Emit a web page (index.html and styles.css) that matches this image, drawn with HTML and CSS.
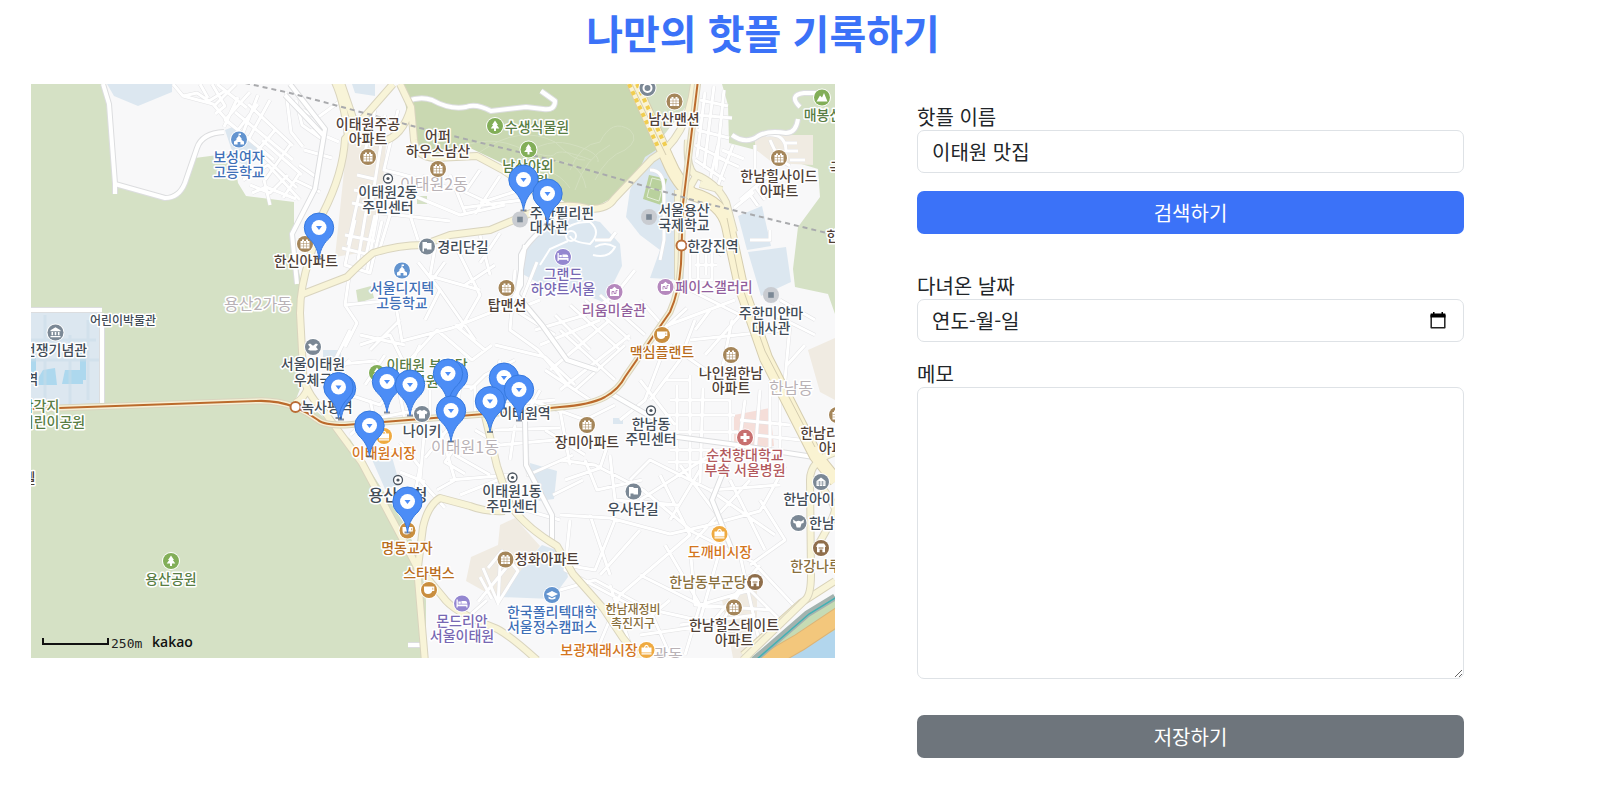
FILE: index.html
```html
<!DOCTYPE html>
<html lang="ko">
<head>
<meta charset="utf-8">
<title>나만의 핫플 기록하기</title>
<meta name="viewport" content="width=device-width, initial-scale=1">
<link rel="stylesheet" href="styles.css">
</head>
<body>
<main class="page">
<h1 class="title">나만의 핫플 기록하기</h1>
<div class="content">
<section class="map-panel" aria-label="지도">
<svg class="map" viewBox="31 84 804 574" role="img" aria-label="이태원 지도">
<defs>
<symbol id="pin" viewBox="0 0 32 48" overflow="visible"><path d="M13 46.500h6" stroke="#3d4656" stroke-width="2" opacity=".6"/><path d="M16 46.500C14.500 36 10.500 30.500 5.500 26A14.700 14.700 0 1 1 26.500 26C21.500 30.500 17.500 36 16 46.500Z" fill="#4c8df6" stroke="#3679df"/><circle cx="16" cy="15.500" r="7.500" fill="#fff"/><path d="M13 14h6l-3 4z" fill="#4c8df6"/></symbol>
<g id="apt"><path d="M-4.500-3h1.500v-1.500h2v1.500h2v-1.500h2v1.500h1.500v7.500h-9z" fill="#fff"/><path d="M-4.500-.5h9M-4.500 2h9M-1.500-3v7.500M1.500-3v7.500" stroke="#a5865a" stroke-width=".5"/></g>
<path id="school" d="M-.4-6h2.400v1.600H.4V-3.500L2.600-1V.6L5 2V5H1.400V2.600h-2.800V5H-5V2l2.400-1.400V-1L-.4-3.500z" fill="#fff"/>
<path id="tree" d="M0-5.500 3-1H1.800L4.300 2.500H1V5H-1V2.500H-4.300L-1.800-1H-3z" fill="#fff"/>
<path id="hill" d="M-5.500 4 -2-2 0 0 2-4.500 5.500 4z" fill="#fff"/>
<g id="dot"><circle r="4.500" fill="#fff" stroke="#4c555f" stroke-width="1.300"/><circle r="1.600" fill="#4c555f"/></g>
<g id="embassy"><circle r="8" fill="#c9ccd1"/><path d="M-2.800-2.800h5.600v5.600h-5.600z" fill="#7b8895"/></g>
<path id="flag" d="M-4.500-4.500H0v1H4.500V3H0V2H-3V5H-4.500z" fill="#fff"/>
<path id="bed" d="M-5.500-4h1.300V1H5.500v3H4.300V2.800H-4.300V4H-5.500zM-3.600-2h2.400v2.300h-2.400zM-.6-2.600H3.500Q5.300-2.600 5.300 0V.3H-.6z" fill="#fff"/>
<g id="art"><path d="M-4.500-3h2L0-5.200 2.500-3h2v7h-9z" fill="#fff"/><path d="M-2.500 2.500v-3h2v2h2v-3h1.500" fill="none" stroke="#b588bd"/></g>
<path id="cup" d="M-5-3.500H5.300V1H3.300Q2.500 4-1 4-5 4-5 0zM3.500-2.200V-.2H4.200V-2.200z" fill="#fff" fill-rule="evenodd"/>
<path id="bag" d="M-5 4.500v-1.200H5v1.200zM-5 2.500v-5h2.500Q-2-5.200 0-5.200T2.500-2.500H5v5zM-1.400-2.500h2.800Q1-4 0-4T-1.400-2.500z" fill="#fff" fill-rule="evenodd"/>
<path id="shirt" d="M-2-4.200Q0-2.500 2-4.200L5.500-2 4.300.5 3-.2V4.500H-3V-.2L-4.300.5-5.500-2z" fill="#fff"/>
<path id="museum" d="M0-5.300 5-2.300v1H-5v-1zM-4-.5h1.600V2.800H-4zM-.8-.5H.8V2.800H-.8zM2.400-.5H4V2.800H2.400zM-5 3.500H5V4.700H-5z" fill="#fff"/>
<path id="mail" d="M-5-2.500-3-3.500 0-1.200 3-3.500 5-2.500 3 0 5 2.500 3 3.500H-3L-5 2.500-3 0z" fill="#fff"/>
<path id="cross" d="M-1.500-4.500h3v3h3v3h-3v3h-3v-3h-3v-3h3z" fill="#fff"/>
<path id="cap" d="M0-4 6-1 0 2-6-1zM-3.500 1.500 0 3.200 3.500 1.500V3.500Q0 5.500-3.500 3.500z" fill="#fff"/>
<path id="shrine" d="M-3-4.500H3L5.200-1.200H4V4.300H1.400V1.500H-1.400V4.300H-4V-1.200H-5.200zM-2.400-.5v1h4.800v-1z" fill="#fff" fill-rule="evenodd"/>
<g id="house"><path d="M0-4.500 4.500-1V4h-9v-5z" fill="#fff"/><path d="M-3.500 0h7M-3.500 2h7M-1.500-1v5M1.500-1v5" stroke="#7b8895" stroke-width=".6"/></g>
<path id="bull" d="M-5.500-3.500-2.500-1.500Q0-3 2.500-1.500L5.500-3.500 5 0 3 .5 1.800 4.500H-1.800L-3 .5-5 0z" fill="#fff"/>
<g id="net">
<path d="M173 84l10 12 14-3 12 8 16-10M183 96l30 8 17 20M200 84l8 14M212 84l13 22-10 8M217 84l30 24M236 84l-22 22M238 97l-14 30M250 92l-25 28 13 10 20-26M226 120l48 40M235 112l58 48M248 104l45 42M258 95l-15 38M270 100l-22 40M275 130l-20 24M290 145l-25 35M257 150l40 38M262 140l40 35M243 180l25-15 32 35M250 185l20 8 18-18M252 193l14-6 30 12M270 205l-6-25M283 198l16-24M286 92l5 40 12 15M296 100l6 25 20 14M303 110l14 8 22-16M311 130l28 12M304 150l28 8M299 165l20 14M295 180l25 12"/>
<path d="M375 110l-12 50M385 115l-5 35-8 50M398 110l-14 60 20 5 42 12M425 175l-20 30-25 8 70 8M400 190l60 25 45-10M450 175l16 40M480 170l-15 22 30 14M500 176l-25 38M520 190l-40 13M462 208l60-8M375 215l-10 45M390 215l-10 33M410 215l8 25M350 270l-5 35 12 18-12 24M345 305l50-5 7 41 50-13 70-28 15-38M400 320l-30 30M418 262l22 28-15 30M435 248l-5 28 50 14M445 262l-20 28M455 245l25 50-20 35M480 235l10 40M500 233l-20 30M495 265l-30 20M440 290l35 50M455 325l30 25M350 330l-20 40M360 345l30-10 15 30 32-35 35 30 20-15M385 355l-20 30M405 345l-45-10M420 345l-20 42"/>
<path d="M515 270l-5 60 28 20 30 35M515 310l40 25M540 300l-25 10M535 330l50-15 30-20 20-25M555 315l35 35M570 305l50 45M585 300l45 40M600 295l45 40M540 345l60-25M550 370l60-50M560 390l70-55M575 390l50-45M590 400l-45-30M615 380l-55-50M495 345l50 12 30 28M500 360l-10 40M470 390l15-15 30-15M640 300l25 28 22-20M655 330l80-30M670 345l50 35 12-60M690 290l50 25-35 40M695 320l-15 40-30 40M700 240l22 15M690 250v30h22v-30zM698 250v30M706 250v25M695 265h22"/>
<path d="M705 92l-8 65M714 86l-10 82M724 90l-8 80M700 100l28 6M698 115l34 3M697 130l32 8M695 145l30 15M718 145l-8 35M733 145l-15 40M695 160l30 20M722 150l22 9M719 158l20 9M740 200l35-30M734 208l20-16M748 192l10 14M755 186l10 14M690 340l95-10M710 310l-15 20M735 290l25 30M780 300l35 20M775 315l40 20M790 325l-5 55M805 345l-18 20"/>
<path d="M640 380l35 45M660 360l-15 40-25 20M665 380h25v70M670 400h60M677 385v85M690 375v105M703 388l-3 95M665 415h70M660 432h78M670 450h78M668 462h60M730 400v50M745 400l-8 60M760 390l-5 65M770 380v75M780 395v65M740 420l50 5M755 435l45 5"/>
<path d="M560 460l35 5 48 25 50 42 60 30 45 48M560 515l50 3 60 16 35-8 55-15 25-45M565 480l35-12 10-30M585 460l12 30 45-10M610 455l5 45 65 5M630 480l20-20 60 30 70-5M640 500l70-45M660 475l30 60-70 60-25 60M680 465l45 60M700 470l-30 50M710 490l65 45M730 480l35 70M750 480l-55 60M760 500l25 40-35 25M570 520l-5 50 65 35 90 20 30-50M590 515l20 60M615 520l-20 50-30-5M640 530l-40 45M560 590l35-10 55 30 20 45M610 585l20 60M640 575l60 30 50-15 35 35M665 545l35 60-15 50M690 545l5 60 75 5M720 550l-20 70M740 555l20 90M760 565l-50 60-70 10M670 600l-30 25M680 625l75-10"/>
<path d="M425 425l-5 55 25 28M440 430l15 50-18 10M455 420l-30 38M455 455l35 20M450 480l60-5M460 495l50-20M400 442l20 25-8 42M385 450l30 5M400 472l25 10M475 430l25 15 55-5M460 440l-15 22 20 12M525 415l3 60 45-20M495 430l65-2M530 400l55 20 30-15M515 425l-5 35M560 410l10 55M545 430l40 25M553 495l30-15M560 520l-35-10M350 435l18-15 50-10M350 395l30 10 15-20M370 400l5 22M400 395l5 25M430 390v28M440 385l35 2v25M460 385l-3 30M500 405l55-5M540 390l-10 18"/>
<path d="M355 220l-10 45 25 8 12-52M345 235l30 6M342 248l32 8M354 190l20 4M352 203l22 5M357 175l17 4M360 190l-12 55M370 188l-12 72M382 188l-15 83M488 568l14-17 16 20-20 32-15-35M500 565l-2 40M480 577l12 22M487 600l-17 15M350 360l-25 22M330 365l45-4 10 12M478 602l28-34M766 135q20-2 20 16h12M755 145v24M770 140q8 20 20 26M790 160h15M785 143h12M650 170q14 0 14 20v50l-4 20M595 240h15l6-8M750 240h20v-10"/>
</g>
<path id="mid-lines" d="M103 84l6 20 6 80v10M115 184l50 14q14 0 20-15l12-35q5-15 27-16M290 84l35 45-10 60-23 45 5 50M285 95l38 40M608 392l45 26M670 436l60 8 90 14M525 420l1 45 26 50v30M102 310H31M102 313v90M408 645h14M407 101q14-5 25-1 18 10 34 7 10-4 25 4l35-4 17 2q12 2 12-8l-14-10M732 135q14 10 26 1 10-6 28-3 10 0 12-14M800 107q-12-12 4-14h12M525 245l-8 50 25 30 25 35 30 10M560 215q-32 24-39 40v30l-14 25M730 455l-18 45 20 50"/>
<path id="arterial-lines" d="M334 80q10 20 14 57M340 80l13 38M393 84l-48 55q-2 35-22 74l-13 44q-10 30-10 56l3 57q0 20 20 40l39 53 41 77 14 27 8 95M295 403q8-3 13-15M303 294l44-17q15-15 26-24 25-8 50-8l27-10 40-5 48-20q30-8 52-1 18 0 24-10l38-40q35-20 42-75M400 84l11 23 3 33q2 17 21 18l42-2 26 14 22 15 35 22M411 107q-8 30-30 35M485 416l12 50 13 39q15 22 47 41l16 28 30 34 20 30 18 22M418 567l5-40q5-22 17-29l30 8q15 6 35 5M418 567l25 30q10 15 52 31 12 5 42 32M743 660l62-60q6-5 6-25l-1-95q0-20 26-28M816 480q18 22 19 30-2 10-20 40"/>
<path id="express-lines" d="M632 80l36 80q10 24 24 34 30 8 36 32l13 60 25 72 50 98 20 25"/>
<path id="ramp-lines" d="M688 140q-2 26 6 34 22 8 32 28l8 30M678 190v90M696 176l-10 18M700 184l22 6"/>
</defs>
<path class="land" d="M31 84h804v574H31z"/>
<g class="park">
<path d="M31 84h70l7 24 7 76 50 14 14-8 16-32 38-5 5 30 8 13 48 6-2 35 11 55-3 60 6 22-10 25 20 12 34 28 55 86 16 36 5 40v58H31z"/>
<path d="M722 84h113v230l-7-20-33-7-2-18 5-42 22-30-2-28-66-20-23-6-1-38z"/><path d="M630 84h66l-8 20-31 40-20-25z"/>
<path d="M290 203h4v44h-4zM417 196h10v8h-10zM356 290l15-4 3 12-16 5z"/>
</g>
<path class="forest" d="M402 84h230l23 52 2 16-47 47-18 10-20-1-36-28-30-15-38-18-32 7-24-12z"/>
<g class="campus">
<path d="M107 84h65v8l-34 14-24-10zM225 130l10-4 26 22-12 20-14-8zM31 312l69-1 3 92-72 3zM352 84h23v12l-20-3zM630 190l15-33 11-7 14 24 14 22v84l-34-2 10-28-20-15-14-18z"/>
<path d="M521 255l18-22 35-17 26 6 20 22 2 22-10 20-4 18-30-12-34-6-25-14zM748 252l38-5 5 35-30 14zM738 216l24-10 9 40-24 4zM370 455l22 2 8 28-15 4zM530 463l27 8-3 28-15 2-8-20zM542 545l20 7 6 25-16 22-52-2 20-30zM323 350h18v12h-18zM613 418h10v6h-10z"/>
</g>
<path d="M31 350h5v28h-5zM80 350h6v30h-6zM43 370l12-2 2 17H34zM65 370h18v14H62z" fill="#add8ee"/>
<path d="M31 340h65M31 360h68M45 315v90M70 335v70M88 320v80" stroke="#cadde9" stroke-width="3" opacity=".5"/>
<g class="estate"><path d="M347 143l39 1-5 65-16 43-30 5zM755 135h58v30l-40-2-18-14zM500 525l15-7 25 28-42 53-32-18 5-24 27-12zM808 350l27-12v62l-15-8zM722 600l35-10v30l-16 38h-8z"/><path d="M734 415l36-7 4 38-40 5z" fill="#f5ded9"/></g>
<path d="M649 175l18 4-6 26-18-6z" fill="#b9d19d"/><path d="M652 178l12 3-5 20-12-4zM649 188l13 3" fill="none" stroke="#e4eed8"/>
<path class="trail" d="M440 158q40-26 75-12t40 8 36 6M480 152q40-28 75-10 20 20 30 18M510 168q30-32 60-24t28 18M570 170q10-26 30-28 12-24 30-12 10 10-5 20M575 190q10-32 35-45M595 180q12-24 30-30M520 178q30-18 50 10M550 162q30-4 36 26"/>
<use href="#net" class="lane-edge"/><use href="#net" class="lane"/>
<use href="#mid-lines" class="mid-edge"/><use href="#mid-lines" class="mid"/>
<g fill="none" stroke="#fff" stroke-width="2"><path d="M560 235q10-14 30-13 12 10 0 22-18-2-20-8M540 265l10-16 18-8M595 247q10-6 20 0-6 12-22 8"/><circle cx="571" cy="236" r="5"/></g>
<path d="M745 662l90-66v66z" fill="#c6dbb4"/><path d="M780 662l55-32v32z" fill="#b2d6ed"/><path d="M762 664l38-22 42-28" stroke="#dcb477" stroke-width="18" fill="none"/><path d="M762 664l38-22 42-28" stroke="#f3c77c" stroke-width="16" fill="none"/>
<path d="M754 660l53-46 28-17" stroke="#a3b3af" stroke-width="7" fill="none"/><path d="M756 660l53-46 28-17" stroke="#41b1b4" stroke-width="1.500" fill="none"/>
<path d="M743 655l58-52 34-22" stroke="#d8d1b6" stroke-width="8" fill="none"/><path d="M743 655l58-52 34-22" stroke="#f8f4d8" stroke-width="6" fill="none"/>
<use href="#arterial-lines" class="arterial-edge"/><use href="#ramp-lines" class="arterial-edge"/><use href="#express-lines" class="express-edge"/>
<use href="#arterial-lines" class="arterial"/><use href="#ramp-lines" class="arterial"/><use href="#express-lines" class="express"/>
<path d="M632 84l34 71M727 218l12 60 26 73 50 96" fill="none" stroke="#d5cdb0"/><path d="M629 84l29 63M637 84l29 63" stroke="#f0cd50" stroke-width="4" stroke-dasharray="4 4"/>
<path id="metro-line" class="metro-road-edge" d="M31 409l225-8q20-1 39 6 12 5 23 13 5 5 27 5l165-13 50-5q30-2 45-10 14-8 20-20l45-65q9-20 11-48l2-60 15-124"/>
<path class="metro-road" d="M31 409l225-8q20-1 39 6 12 5 23 13 5 5 27 5l165-13 50-5q30-2 45-10 14-8 20-20l45-65q9-20 11-48l2-60 15-124"/>
<path class="metro" d="M31 409l225-8q20-1 39 6 12 5 23 13 5 5 27 5l165-13 50-5q30-2 45-10 14-8 20-20l45-65q9-20 11-48l2-60 15-124"/>
<path class="boundary" d="M245 83l45 10 130 35 140 34 140 40 135 33"/>
<g class="station"><circle cx="295.500" cy="407" r="5"/><circle cx="681.500" cy="245.500" r="5"/></g>

<g class="district"><text x="258" y="310">용산2가동</text><text x="434" y="190">이태원2동</text><text x="791" y="394">한남동</text><text x="465" y="453">이태원1동</text><text x="668" y="661">광동</text></g>

<g class="badges">
<g fill="#6394cf"><circle cx="239" cy="139.500" r="8"/><circle cx="402" cy="270.500" r="8"/><circle cx="552" cy="595" r="8"/></g>
<g fill="#82ae58"><circle cx="495" cy="126" r="8"/><circle cx="528.500" cy="149.500" r="8"/><circle cx="171" cy="561" r="8"/><circle cx="822" cy="97.500" r="8"/><circle cx="377" cy="373" r="8"/></g>
<g fill="#a5865a"><circle cx="368" cy="157" r="8"/><circle cx="438" cy="169" r="8"/><circle cx="305" cy="244" r="8"/><circle cx="506.500" cy="288" r="8"/><circle cx="674.500" cy="101.500" r="8"/><circle cx="779" cy="158" r="8"/><circle cx="731" cy="355" r="8"/><circle cx="587" cy="425" r="8"/><circle cx="837" cy="415" r="8"/><circle cx="505.500" cy="559.500" r="8"/><circle cx="734" cy="607.500" r="8"/></g>
<g fill="#7b8895"><circle cx="55.500" cy="332.500" r="8"/><circle cx="427" cy="246.500" r="8"/><circle cx="313" cy="347" r="8"/><circle cx="422" cy="414" r="8"/><circle cx="633.500" cy="491.500" r="8"/><circle cx="821" cy="482" r="8"/><circle cx="798.500" cy="523" r="8"/><circle cx="647.500" cy="88" r="8"/></g>
<g fill="#9487d0"><circle cx="563" cy="257" r="8"/><circle cx="462" cy="603.500" r="8"/></g>
<g fill="#b588bd"><circle cx="665.500" cy="287" r="8"/><circle cx="614.500" cy="292" r="8"/></g>
<g fill="#c98e3f"><circle cx="662" cy="335" r="8"/><circle cx="407.500" cy="530.500" r="8"/><circle cx="429" cy="590" r="8"/></g>
<g fill="#efaa41"><circle cx="384" cy="436" r="8"/><circle cx="719.500" cy="534" r="8"/><circle cx="646.500" cy="650" r="8"/></g>
<circle cx="745" cy="437.500" r="8" fill="#c87070"/>
<g fill="#8f6e4b"><circle cx="755" cy="582" r="8"/><circle cx="821" cy="548" r="8"/></g>
</g>
<use href="#school" x="239" y="139.500"/><use href="#school" x="402" y="270.500"/><use href="#cap" x="552" y="595"/>
<use href="#tree" x="495" y="126"/><use href="#tree" x="528.500" y="149.500"/><use href="#tree" x="171" y="561"/><use href="#hill" x="822" y="97.500"/><use href="#tree" x="377" y="373"/>
<use href="#apt" x="368" y="157"/><use href="#apt" x="438" y="169"/><use href="#apt" x="305" y="244"/><use href="#apt" x="506.500" y="288"/><use href="#apt" x="674.500" y="101.500"/><use href="#apt" x="779" y="158"/><use href="#apt" x="731" y="355"/><use href="#apt" x="587" y="425"/><use href="#apt" x="837" y="415"/><use href="#apt" x="505.500" y="559.500"/><use href="#apt" x="734" y="607.500"/>
<use href="#museum" x="55.500" y="332.500"/><use href="#flag" x="427" y="246.500"/><use href="#mail" x="313" y="347"/><use href="#shirt" x="422" y="414"/><use href="#flag" x="633.500" y="491.500"/><use href="#house" x="821" y="482"/><use href="#bull" x="798.500" y="523"/><circle cx="647.500" cy="88" r="4" fill="none" stroke="#fff" stroke-width="2"/>
<use href="#bed" x="563" y="257"/><use href="#bed" x="462" y="603.500"/><use href="#art" x="665.500" y="287"/><use href="#art" x="614.500" y="292"/>
<use href="#cup" x="662" y="335"/><use href="#cup" x="407.500" y="530.500"/><use href="#cup" x="429" y="590"/><use href="#bag" x="384" y="436"/><use href="#bag" x="719.500" y="534"/><use href="#bag" x="646.500" y="650"/><use href="#cross" x="745" y="437.500"/><use href="#shrine" x="755" y="582"/><use href="#shrine" x="821" y="548"/>
<use href="#embassy" x="520" y="219.500"/><use href="#embassy" x="649" y="217"/><use href="#embassy" x="771" y="295"/>
<use href="#dot" x="388" y="178.500"/><use href="#dot" x="651" y="410.500"/><use href="#dot" x="398" y="480"/><use href="#dot" x="512.500" y="477.500"/>

<g class="label blue"><text x="239" y="162">보성여자</text><text x="239" y="177">고등학교</text><text x="402" y="293">서울디지텍</text><text x="402" y="308">고등학교</text><text x="552" y="617">한국폴리텍대학</text><text x="552" y="632">서울정수캠퍼스</text></g>
<g class="label green"><text x="537" y="132">수생식물원</text><text x="528" y="171">남산야외</text><text x="529" y="186">식물원</text><text x="171" y="584">용산공원</text><text x="823" y="120">매봉산</text><text x="427" y="370">이태원 부군당</text><text x="413" y="386">역사공원</text><text x="40" y="411">삼각지</text><text x="53" y="427">어린이공원</text></g>
<g class="label brown"><text x="368" y="129">이태원주공</text><text x="368" y="144">아파트</text><text x="438" y="141">어퍼</text><text x="438" y="156">하우스남산</text><text x="306" y="266">한신아파트</text><text x="507" y="310">탑맨션</text><text x="674" y="124">남산맨션</text><text x="779" y="181">한남힐사이드</text><text x="779" y="196">아파트</text><text x="731" y="378">나인원한남</text><text x="731" y="393">아파트</text><text x="587" y="447">장미아파트</text><text x="826" y="438">한남리버</text><text x="838" y="453">아파트</text><text x="547" y="564">청화아파트</text><text x="734" y="630">한남힐스테이트</text><text x="734" y="645">아파트</text><text x="29" y="483">텔</text><text x="836" y="173">극</text><text x="833" y="241">한</text></g>
<g class="label slate"><text x="388" y="197">이태원2동</text><text x="388" y="212">주민센터</text><text x="562" y="218">주한필리핀</text><text x="549" y="232">대사관</text><text x="463" y="252">경리단길</text><text x="684" y="215">서울용산</text><text x="684" y="230">국제학교</text><text x="713" y="251">한강진역</text><text x="771" y="318">주한미얀마</text><text x="771" y="333">대사관</text><text x="313" y="369">서울이태원</text><text x="313" y="385">우체국</text><text x="327" y="412">녹사평역</text><text x="525" y="418">이태원역</text><text x="422" y="436">나이키</text><text x="512" y="496">이태원1동</text><text x="512" y="511">주민센터</text><text x="651" y="429">한남동</text><text x="651" y="444">주민센터</text><text x="633" y="514">우사단길</text><text x="809" y="504">한남아이</text><text x="822" y="528">한남</text><text x="55" y="355">전쟁기념관</text><text x="32" y="384">역</text><text x="123" y="325" class="small">어린이박물관</text><text x="398" y="501" class="large">용산구청</text></g>
<g class="label violet"><text x="563" y="279">그랜드</text><text x="563" y="294">하얏트서울</text><text x="462" y="626">몬드리안</text><text x="462" y="641">서울이태원</text></g>
<g class="label plum"><text x="714" y="292">페이스갤러리</text><text x="614" y="315">리움미술관</text></g>
<g class="label copper"><text x="662" y="357">맥심플랜트</text><text x="407" y="553">명동교자</text><text x="429" y="578">스타벅스</text></g>
<g class="label orange"><text x="384" y="458">이태원시장</text><text x="720" y="557">도깨비시장</text><text x="599" y="655">보광재래시장</text></g>
<g class="label red"><text x="745" y="460">순천향대학교</text><text x="745" y="475">부속 서울병원</text></g>
<g class="label olive"><text x="708" y="587">한남동부군당</text><text x="816" y="571">한강나루</text><text x="633" y="614" class="small">한남재정비</text><text x="633" y="628" class="small">촉진지구</text></g>

<g class="pins">
<use href="#pin" x="507.500" y="164" width="32" height="48"/><use href="#pin" x="531.500" y="178" width="32" height="48"/><use href="#pin" x="303" y="212" width="32" height="48"/>
<use href="#pin" x="325" y="373" width="32" height="48"/><use href="#pin" x="322.500" y="371.500" width="32" height="48"/>
<use href="#pin" x="371" y="366" width="32" height="48"/><use href="#pin" x="394" y="369" width="32" height="48"/>
<use href="#pin" x="437" y="360" width="32" height="48"/><use href="#pin" x="432" y="358" width="32" height="48"/>
<use href="#pin" x="488" y="362" width="32" height="48"/><use href="#pin" x="503" y="374" width="32" height="48"/><use href="#pin" x="474" y="385.500" width="32" height="48"/>
<use href="#pin" x="435" y="395" width="32" height="48"/><use href="#pin" x="353.500" y="410" width="32" height="48"/><use href="#pin" x="391.500" y="486" width="32" height="48"/>
</g>
<path d="M43 638v6h65v-6" fill="none" stroke="#111" stroke-width="2"/>
<text x="111" y="648" class="scale">250m</text><text x="152" y="647" class="brand">kakao</text>
</svg>
</section>
<form class="form">
<div class="field"><label for="place">핫플 이름</label><input id="place" type="text" class="control" value="이태원 맛집"></div>
<button type="button" class="button button-search">검색하기</button>
<div class="field"><label for="visited">다녀온 날짜</label>
<div class="control date"><input id="visited" type="text" class="date-text" value="연도-월-일"><button type="button" class="date-button" aria-label="날짜 선택"><svg viewBox="0 0 16 18" aria-hidden="true"><path d="M1.200 3v12.800h13.600V3" fill="none" stroke="#222" stroke-width="1.500" stroke-linejoin="round"/><path d="M.500 2Q.500 1.500 1 1.500h2V0h1.500v1.500h7V0H13v1.500h2q.500 0 .500.500v3.500H.500z" fill="#000"/></svg></button></div></div>
<div class="field field-memo"><label for="memo">메모</label><textarea id="memo" class="control memo"></textarea></div>
<button type="submit" class="button button-save">저장하기</button>
</form>
</div>
</main>
</body>
</html>
```
FILE: styles.css
```css
* { box-sizing: border-box; }

body {
  margin: 0;
  background: #fff;
  color: #212529;
  font: 20px/30px "Noto Sans CJK KR", sans-serif;
}

.page { padding: 8px 74px 30px 0; }

.title {
  margin: 0 0 28px;
  color: #3b72f8;
  font-size: 40px;
  line-height: 48px;
  font-weight: 700;
  text-align: center;
}

.content {
  display: grid;
  grid-template-columns: minmax(0, 804fr) minmax(0, 547fr);
  gap: 82px;
  align-items: start;
  padding: 0 62px 0 31px;
}

.map { display: block; width: 100%; overflow: hidden; }

.land { fill: #f8f8f9; }
.park { fill: #d5e1c5; }
.forest { fill: #c9d8b1; }
.campus { fill: #dce7f0; }
.estate { fill: #f0ebe2; }
.trail { fill: none; stroke: #d3dfbf; stroke-width: 1; }
.lane-edge { fill: none; stroke: #e2e2e4; stroke-width: 4; stroke-linejoin: round; }
.lane { fill: none; stroke: #fff; stroke-width: 3; stroke-linejoin: round; }
.mid-edge { fill: none; stroke: #dcdddf; stroke-width: 6; stroke-linejoin: round; }
.mid { fill: none; stroke: #fff; stroke-width: 4; stroke-linejoin: round; }
.arterial-edge { fill: none; stroke: #d9d4be; stroke-width: 8; stroke-linejoin: round; }
.arterial { fill: none; stroke: #f8f4d8; stroke-width: 6; stroke-linejoin: round; }
.express-edge { fill: none; stroke: #d5cdb0; stroke-width: 14; stroke-linejoin: round; }
.express { fill: none; stroke: #faf3d2; stroke-width: 12; stroke-linejoin: round; }
.metro-road-edge { fill: none; stroke: #d9d4be; stroke-width: 7; }
.metro-road { fill: none; stroke: #f6f0d6; stroke-width: 5; }
.metro { fill: none; stroke: #bb6a2c; stroke-width: 2; }
.boundary { fill: none; stroke: #a9aaad; stroke-width: 2; stroke-dasharray: 5 4; }
.station { fill: #fff; stroke: #ba6d36; stroke-width: 2; }
.badges { stroke: #fff; stroke-width: 2; paint-order: stroke; }

.label, .district {
  font-family: "Noto Sans CJK KR", sans-serif;
  font-size: 14px;
  font-weight: 500;
  text-anchor: middle;
  paint-order: stroke;
  stroke: #fff;
  stroke-width: 3px;
  stroke-linejoin: round;
}
.district { fill: #b9b2b6; font-size: 16px; font-weight: 400; }
.small { font-size: 12px; }
.large { font-size: 16px; }
.blue { fill: #3f70b7; }
.green { fill: #587d43; }
.brown { fill: #4f4037; }
.slate { fill: #424c57; }
.violet { fill: #7768b3; }
.plum { fill: #925f9d; }
.copper { fill: #b96d20; }
.orange { fill: #d3761e; }
.red { fill: #b2595d; }
.olive { fill: #89703e; }
.scale { font: 13px "DejaVu Sans Mono", monospace; fill: #222; }
.brand { font: 600 14px "Open Sans", sans-serif; fill: #111; }

.form { display: flex; flex-direction: column; padding-top: 17px; }

.field { display: flex; flex-direction: column; }

.control {
  display: block;
  width: 100%;
  height: 43px;
  padding: 0 14px;
  border: 1px solid #dee2e6;
  border-radius: 7px;
  background: #fff;
  color: #212529;
  font: inherit;
}
.field label { line-height: 29px; padding-top: 1px; }
.field label + .control { margin-top: -1px; }

.button {
  height: 43px;
  padding: 0;
  border: 0;
  border-radius: 7px;
  color: #fff;
  font: inherit;
}
.button-search { margin: 18px 0 36px; background: #3b72f8; }
.button-save { margin-top: 36px; background: #6e757c; }

.date { display: flex; align-items: center; justify-content: space-between; padding-right: 17px; }
.date-text {
  flex: 1;
  min-width: 0;
  padding: 0;
  border: 0;
  background: none;
  color: inherit;
  font: inherit;
}
.date-button { display: flex; padding: 0; border: 0; background: none; }
.date-button svg { width: 16px; height: 18px; }

.field-memo { margin-top: 16px; }
.memo { height: 292px; padding: 6px 14px; resize: vertical; }
```
